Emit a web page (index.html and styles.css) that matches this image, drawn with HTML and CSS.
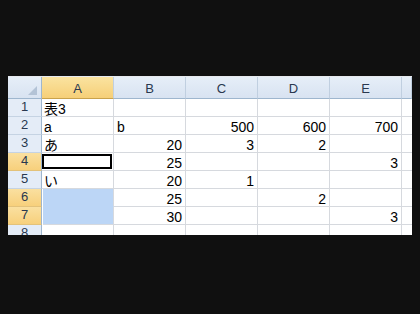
FILE: index.html
```html
<!DOCTYPE html>
<html lang="ja">
<head>
<meta charset="utf-8">
<title>Sheet</title>
<link rel="stylesheet" href="styles.css">
</head>
<body>
<div class="sheet">
  <div class="corner"><span class="tri"></span></div>
  <div class="ch sel">A</div>
  <div class="ch">B</div>
  <div class="ch">C</div>
  <div class="ch">D</div>
  <div class="ch">E</div>
  <div class="ch edge"></div>

  <div class="rh">1</div>
  <div class="c">表3</div><div class="c"></div><div class="c"></div><div class="c"></div><div class="c"></div><div class="c edge"></div>

  <div class="rh">2</div>
  <div class="c">a</div><div class="c b">b</div><div class="c n">500</div><div class="c n">600</div><div class="c n">700</div><div class="c edge"></div>

  <div class="rh">3</div>
  <div class="c">あ</div><div class="c n">20</div><div class="c n">3</div><div class="c n">2</div><div class="c"></div><div class="c edge"></div>

  <div class="rh sel">4</div>
  <div class="c active"><span class="box"></span></div><div class="c n">25</div><div class="c"></div><div class="c"></div><div class="c n">3</div><div class="c edge"></div>

  <div class="rh">5</div>
  <div class="c">い</div><div class="c n">20</div><div class="c n">1</div><div class="c"></div><div class="c"></div><div class="c edge"></div>

  <div class="rh sel">6</div>
  <div class="c hl top"></div><div class="c n">25</div><div class="c"></div><div class="c n">2</div><div class="c"></div><div class="c edge"></div>

  <div class="rh sel">7</div>
  <div class="c hl"></div><div class="c n">30</div><div class="c"></div><div class="c"></div><div class="c n">3</div><div class="c edge"></div>

  <div class="rh">8</div>
  <div class="c"></div><div class="c"></div><div class="c"></div><div class="c"></div><div class="c"></div><div class="c edge"></div>
</div>
</body>
</html>
```
FILE: styles.css
```css
html, body {
  margin: 0;
  padding: 0;
  background: #101010;
}

.sheet {
  margin: 76px 0 0 8px;
  width: 404px;
  height: 159px;
  box-sizing: border-box;
  overflow: hidden;
  display: grid;
  grid-template-columns: 34px repeat(5, 72px) 10px;
  grid-template-rows: 22px repeat(8, 18px);
  background: #ffffff;
  border-top: 1px solid #e6e9ee;
  font-family: "Liberation Sans", "Noto Sans CJK JP", sans-serif;
  font-size: 14px;
  color: #000;
}

.corner {
  position: relative;
  background: linear-gradient(#e6eef8, #d8e3f1);
  border-right: 1px solid #9eb6ce;
  border-bottom: 1px solid #9eb6ce;
}

.tri {
  position: absolute;
  right: 4px;
  bottom: 3px;
  width: 0;
  height: 0;
  border-left: 9px solid transparent;
  border-bottom: 9px solid #b3c3d6;
}

.ch {
  display: flex;
  align-items: flex-end;
  justify-content: center;
  line-height: 14px;
  padding-bottom: 2px;
  font-size: 13px;
  color: #29384f;
  background: linear-gradient(#e6eef8, #d8e3f1);
  border-right: 1px solid #c0cfe0;
  border-bottom: 1px solid #9eb6ce;
}

.ch.sel {
  background: linear-gradient(#fae3a0, #f6cf78);
  border-bottom-color: #c9a24c;
}

.rh {
  display: flex;
  align-items: flex-end;
  justify-content: center;
  line-height: 14px;
  padding-bottom: 2px;
  font-size: 13px;
  color: #29384f;
  background: #e4ecf7;
  border-right: 1px solid #9eb6ce;
  border-bottom: 1px solid #c5d3e3;
  box-sizing: border-box;
}

.rh.sel {
  background: linear-gradient(#fae0a0, #f7d07c);
  border-bottom-color: #e3c27a;
}

.c {
  display: flex;
  align-items: flex-end;
  line-height: 14px;
  padding: 0 3px 0 2px;
  white-space: nowrap;
  overflow: hidden;
  border-right: 1px solid #d6d9de;
  border-bottom: 1px solid #d6d9de;
}

.c.b {
  padding-left: 3px;
}

.c.n {
  justify-content: flex-end;
}

.c.edge {
  border-right: none;
}

.c.active {
  padding: 1px 1px 1px 0;
  align-items: stretch;
}

.box {
  flex: 1;
  border: 2px solid #000;
}

.c.hl {
  background: #bcd6f6;
  margin-left: 1px;
}

.c.hl.top {
  border-bottom-color: #bcd6f6;
}
```
